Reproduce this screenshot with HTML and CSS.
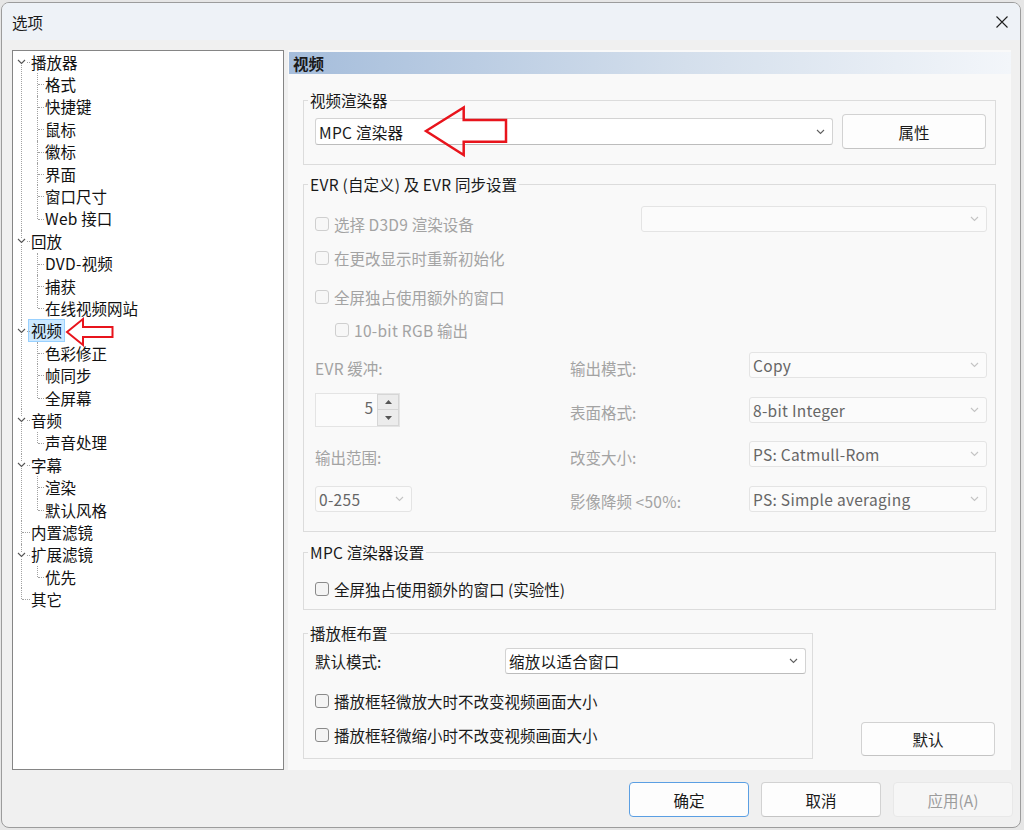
FILE: index.html
```html
<!DOCTYPE html>
<html lang="zh-CN">
<head>
<meta charset="utf-8">
<title>选项</title>
<link rel="stylesheet" href="styles.css">
</head>
<body>
<div class="dialog">
  <div class="titlebar">
    <span class="title">选项</span>
    <span class="close"><svg width="12" height="12" viewBox="0 0 12 12"><path d="M0.5 0.5 L11.5 11.5 M11.5 0.5 L0.5 11.5" stroke="#1f1f1f" stroke-width="1.1" fill="none"/></svg></span>
  </div>

  <div class="main">
    <div class="tree-panel">
      <ul class="tree">
        <li><div class="row"><svg class="chev" width="9" height="6" viewBox="0 0 9 6"><path d="M1 1 L4.5 4.5 L8 1" fill="none" stroke="#555" stroke-width="1.1"/></svg><span class="txt">播放器</span></div>
          <ul>
            <li><div class="row"><span class="txt">格式</span></div></li>
            <li><div class="row"><span class="txt">快捷键</span></div></li>
            <li><div class="row"><span class="txt">鼠标</span></div></li>
            <li><div class="row"><span class="txt">徽标</span></div></li>
            <li><div class="row"><span class="txt">界面</span></div></li>
            <li><div class="row"><span class="txt">窗口尺寸</span></div></li>
            <li><div class="row"><span class="txt"><span class="lat">Web</span> 接口</span></div></li>
          </ul>
        </li>
        <li><div class="row"><svg class="chev" width="9" height="6" viewBox="0 0 9 6"><path d="M1 1 L4.5 4.5 L8 1" fill="none" stroke="#555" stroke-width="1.1"/></svg><span class="txt">回放</span></div>
          <ul>
            <li><div class="row"><span class="txt"><span class="lat">DVD-</span>视频</span></div></li>
            <li><div class="row"><span class="txt">捕获</span></div></li>
            <li><div class="row"><span class="txt">在线视频网站</span></div></li>
          </ul>
        </li>
        <li><div class="row"><svg class="chev" width="9" height="6" viewBox="0 0 9 6"><path d="M1 1 L4.5 4.5 L8 1" fill="none" stroke="#555" stroke-width="1.1"/></svg><span class="txt sel">视频</span></div>
          <ul>
            <li><div class="row"><span class="txt">色彩修正</span></div></li>
            <li><div class="row"><span class="txt">帧同步</span></div></li>
            <li><div class="row"><span class="txt">全屏幕</span></div></li>
          </ul>
        </li>
        <li><div class="row"><svg class="chev" width="9" height="6" viewBox="0 0 9 6"><path d="M1 1 L4.5 4.5 L8 1" fill="none" stroke="#555" stroke-width="1.1"/></svg><span class="txt">音频</span></div>
          <ul>
            <li><div class="row"><span class="txt">声音处理</span></div></li>
          </ul>
        </li>
        <li><div class="row"><svg class="chev" width="9" height="6" viewBox="0 0 9 6"><path d="M1 1 L4.5 4.5 L8 1" fill="none" stroke="#555" stroke-width="1.1"/></svg><span class="txt">字幕</span></div>
          <ul>
            <li><div class="row"><span class="txt">渲染</span></div></li>
            <li><div class="row"><span class="txt">默认风格</span></div></li>
          </ul>
        </li>
        <li><div class="row"><span class="txt">内置滤镜</span></div></li>
        <li><div class="row"><svg class="chev" width="9" height="6" viewBox="0 0 9 6"><path d="M1 1 L4.5 4.5 L8 1" fill="none" stroke="#555" stroke-width="1.1"/></svg><span class="txt">扩展滤镜</span></div>
          <ul>
            <li><div class="row"><span class="txt">优先</span></div></li>
          </ul>
        </li>
        <li><div class="row"><span class="txt">其它</span></div></li>
      </ul>
      <svg class="mark mark-tree" width="52" height="32" viewBox="0 0 52 32"><polygon points="3,16 19,3 19,11 48.5,11 48.5,21 19,21 19,29" fill="none" stroke="#e8141c" stroke-width="2" stroke-linejoin="miter"/></svg>
    </div>

    <div class="page">
      <div class="page-head">视频</div>

      <fieldset class="group g1">
        <legend>视频渲染器</legend>
        <div class="renderer-row">
          <div class="combo combo-renderer"><span class="combo-text">MPC 渲染器</span><svg class="cv" width="9" height="6" viewBox="0 0 9 6"><path d="M1 1 L4.5 4.5 L8 1" fill="none" stroke="#606060" stroke-width="1.1"/></svg></div>
          <button class="btn btn-prop">属性</button>
        </div>
      </fieldset>

      <fieldset class="group g2">
        <legend><span class="lat">EVR (</span>自定义<span class="lat">)</span> 及 <span class="lat">EVR</span> 同步设置</legend>
        <div class="evr-row1">
          <label class="chk dis first-chk"><span class="box"></span><span>选择 <span class="lat">D3D9</span> 渲染设备</span></label>
          <div class="combo dis combo-d3d"><span class="combo-text"></span><svg class="cv" width="9" height="6" viewBox="0 0 9 6"><path d="M1 1 L4.5 4.5 L8 1" fill="none" stroke="#c4c4c4" stroke-width="1.1"/></svg></div>
        </div>
        <label class="chk dis r2"><span class="box"></span>在更改显示时重新初始化</label>
        <label class="chk dis r3"><span class="box"></span>全屏独占使用额外的窗口</label>
        <label class="chk dis r4"><span class="box"></span><span><span class="lat">10-bit RGB</span> 输出</span></label>

        <div class="evr-grid">
          <span class="glabel"><span class="lat">EVR</span> 缓冲:</span>
          <span class="glabel">输出模式:</span>
          <div class="combo dis gcombo"><span class="combo-text">Copy</span><svg class="cv" width="9" height="6" viewBox="0 0 9 6"><path d="M1 1 L4.5 4.5 L8 1" fill="none" stroke="#c4c4c4" stroke-width="1.1"/></svg></div>

          <div class="spin">
            <span class="spin-val">5</span>
            <span class="spin-btns">
              <span class="spin-b"><svg width="7" height="4" viewBox="0 0 7 4"><polygon points="0,4 3.5,0 7,4" fill="#555"/></svg></span>
              <span class="spin-b"><svg width="7" height="4" viewBox="0 0 7 4"><polygon points="0,0 3.5,4 7,0" fill="#555"/></svg></span>
            </span>
          </div>
          <span class="glabel">表面格式:</span>
          <div class="combo dis gcombo"><span class="combo-text">8-bit Integer</span><svg class="cv" width="9" height="6" viewBox="0 0 9 6"><path d="M1 1 L4.5 4.5 L8 1" fill="none" stroke="#c4c4c4" stroke-width="1.1"/></svg></div>

          <span class="glabel">输出范围:</span>
          <span class="glabel">改变大小:</span>
          <div class="combo dis gcombo"><span class="combo-text">PS: Catmull-Rom</span><svg class="cv" width="9" height="6" viewBox="0 0 9 6"><path d="M1 1 L4.5 4.5 L8 1" fill="none" stroke="#c4c4c4" stroke-width="1.1"/></svg></div>

          <div class="combo dis combo-range"><span class="combo-text">0-255</span><svg class="cv" width="9" height="6" viewBox="0 0 9 6"><path d="M1 1 L4.5 4.5 L8 1" fill="none" stroke="#c4c4c4" stroke-width="1.1"/></svg></div>
          <span class="glabel">影像降频 <span class="lat">&lt;50%:</span></span>
          <div class="combo dis gcombo"><span class="combo-text">PS: Simple averaging</span><svg class="cv" width="9" height="6" viewBox="0 0 9 6"><path d="M1 1 L4.5 4.5 L8 1" fill="none" stroke="#c4c4c4" stroke-width="1.1"/></svg></div>
        </div>
      </fieldset>

      <fieldset class="group g3">
        <legend><span class="lat">MPC</span> 渲染器设置</legend>
        <label class="chk"><span class="box"></span>全屏独占使用额外的窗口 (实验性)</label>
      </fieldset>

      <div class="bottom-row">
        <fieldset class="group g4">
          <legend>播放框布置</legend>
          <div class="mode-row">
            <span class="mode-label">默认模式:</span>
            <div class="combo combo-mode"><span class="combo-text">缩放以适合窗口</span><svg class="cv" width="9" height="6" viewBox="0 0 9 6"><path d="M1 1 L4.5 4.5 L8 1" fill="none" stroke="#606060" stroke-width="1.1"/></svg></div>
          </div>
          <label class="chk c1"><span class="box"></span>播放框轻微放大时不改变视频画面大小</label>
          <label class="chk c2"><span class="box"></span>播放框轻微缩小时不改变视频画面大小</label>
        </fieldset>
        <button class="btn btn-default">默认</button>
      </div>

      <svg class="mark mark-combo" width="86" height="54" viewBox="0 0 86 54"><polygon points="3,26 40.7,2.5 40.7,15 83,15 83,36.7 40.7,36.7 40.7,50" fill="none" stroke="#e8141c" stroke-width="2.5" stroke-linejoin="miter"/></svg>
    </div>
  </div>

  <div class="footer">
    <button class="btn fbtn ok">确定</button>
    <button class="btn fbtn">取消</button>
    <button class="btn fbtn disabled">应用(A)</button>
  </div>
</div>
</body>
</html>
```

FILE: styles.css
```css
* { box-sizing: border-box; }
html, body { margin: 0; padding: 0; }
body {
  width: 1024px;
  height: 830px;
  overflow: hidden;
  background: #e6e6e6;
  font-family: "Noto Sans CJK SC", "Microsoft YaHei", sans-serif;
  font-size: 15.5px;
  color: #1a1a1a;
}

.lat { letter-spacing: 0.3px; }

.dialog {
  margin: 2px 0 0 1px;
  width: 1020px;
  height: 826px;
  border: 1px solid #9c9c9c;
  border-radius: 8px;
  background: #f0f0f0;
  overflow: hidden;
  display: flex;
  flex-direction: column;
}

.titlebar {
  flex: none;
  height: 37px;
  background: #eef2f7;
  display: flex;
  align-items: center;
  padding-left: 10px;
}
.title { line-height: 20px; }
.close { margin-left: auto; margin-right: 12px; display: flex; }

.main {
  flex: none;
  height: 730px;
  padding: 10px 9px 0 10px;
  display: flex;
  gap: 4px;
}

/* ---------- tree ---------- */
.tree-panel {
  width: 272px;
  flex: none;
  background: #fff;
  border: 1px solid #858585;
  position: relative;
}
.tree, .tree ul { list-style: none; margin: 0; padding: 0; }
.tree li { position: relative; }
.row {
  position: relative;
  height: 22.4px;
  display: flex;
  align-items: center;
  line-height: 21px;
  white-space: nowrap;
}
.tree > li > .row { padding-left: 18px; }
.tree ul .row { padding-left: 32px; }

.tree > li::before {
  content: "";
  position: absolute;
  left: 8px;
  top: 0;
  bottom: 0;
  border-left: 1px dotted #a2a2a2;
}
.tree > li:first-child::before { top: 11px; }
.tree > li:last-child::before { bottom: auto; height: 11px; }
.tree > li::after {
  content: "";
  position: absolute;
  left: 9px;
  top: 11px;
  width: 8px;
  border-top: 1px dotted #a2a2a2;
}
.tree ul > li::before {
  content: "";
  position: absolute;
  left: 24px;
  top: 0;
  bottom: 0;
  border-left: 1px dotted #a2a2a2;
}
.tree ul > li:last-child::before { bottom: auto; height: 11px; }
.tree ul > li::after {
  content: "";
  position: absolute;
  left: 25px;
  top: 11px;
  width: 6px;
  border-top: 1px dotted #a2a2a2;
}
.chev {
  position: absolute;
  left: 4px;
  top: 8px;
  background: #fff;
  z-index: 1;
}
.txt { color: #111; }
.txt.sel {
  margin-left: -3px;
  padding: 0 2px;
  height: 23px;
  line-height: 21px;
  background: #cce8ff;
  border: 1px solid #99d1ff;
}

.mark { position: absolute; }
.mark-tree { left: 51px; top: 265px; }
.mark-combo { left: 135px; top: 55px; }

/* ---------- page ---------- */
.page {
  flex: 1;
  position: relative;
  background: #f9f9f9;
  padding: 2px 0 11px 0;
  display: flex;
  flex-direction: column;
}
.page-head {
  flex: none;
  height: 22px;
  margin-left: 1px;
  padding-left: 4px;
  line-height: 22px;
  font-weight: bold;
  background: linear-gradient(to right, #a5bddb, #d4dfec 55%, #f3f6fa);
}

.group {
  margin: 0 0 0 15px;
  padding: 0;
  border: 1px solid #dcdcdc;
  min-width: 0;
}
.group legend {
  margin-left: -7px;
  padding: 0 2px;
  height: 20px;
  line-height: 20px;
  color: #1a1a1a;
}

.g1 { width: 693px; margin-top: 16px; padding: 4px 9px 15px 11px; }
.renderer-row { display: flex; align-items: center; height: 35px; }

.combo {
  height: 27px;
  background: #fff;
  border: 1px solid #d3d3d3;
  border-bottom-color: #bcbcbc;
  border-radius: 3px;
  display: flex;
  align-items: center;
  padding-left: 3px;
  padding-right: 7px;
  white-space: nowrap;
}
.combo-text { flex: 1; line-height: 20px; letter-spacing: 0.3px; }
.cv { flex: none; }
.combo.dis {
  background: #fbfbfb;
  border-color: #e4e4e4;
  color: #666;
  height: 26px;
}
.combo-renderer { width: 518px; }

.btn {
  font: inherit;
  color: #1a1a1a;
  background: #fdfdfd;
  border: 1px solid #d2d2d2;
  border-bottom-color: #c4c4c4;
  border-radius: 4px;
  padding: 0;
  height: 35px;
}
.btn-prop { width: 144px; margin-left: 9px; }

.g2 { width: 693px; margin-top: 9px; padding: 0 8px 10px 11px; }
.evr-row1 { display: flex; align-items: flex-start; margin-top: 12px; }
.first-chk { margin-top: 8px; }
.combo-d3d { margin-left: auto; width: 346px; }

.chk {
  display: flex;
  align-items: center;
  gap: 5px;
  height: 20px;
  line-height: 20px;
  white-space: nowrap;
}
.box {
  width: 14px;
  height: 14px;
  flex: none;
  border: 1px solid #8a8a8a;
  border-radius: 3px;
  background: #f4f4f4;
}
.chk.dis { color: #a3a3a3; }
.chk.dis .box { border-color: #cfcfcf; background: #f7f7f7; }
.r2 { margin-top: 14px; }
.r3 { margin-top: 19px; }
.r4 { margin-top: 13px; padding-left: 20px; }

.evr-grid {
  margin-top: 3px;
  display: grid;
  grid-template-columns: 255px 179px 238px;
  grid-template-rows: repeat(4, 44.5px);
  align-items: center;
}
.glabel { color: #a3a3a3; padding-top: 5px; line-height: 20px; white-space: nowrap; }
.gcombo { width: 238px; }
.combo-range { width: 97px; }

.spin {
  width: 85px;
  height: 34px;
  display: flex;
  border: 1px solid #e4e4e4;
  background: #fbfbfb;
}
.spin-val {
  flex: 1;
  text-align: right;
  padding-right: 4px;
  padding-top: 3px;
  line-height: 20px;
  color: #666;
}
.spin-btns { width: 22px; display: flex; flex-direction: column; }
.spin-b {
  flex: 1;
  display: flex;
  align-items: center;
  justify-content: center;
  background: #ececec;
  border: 1px solid #d6d6d6;
}
.spin-b + .spin-b { border-top: none; }

.g3 { width: 693px; margin-top: 10px; padding: 17px 8px 10px 11px; }

.bottom-row { display: flex; align-items: flex-end; margin-top: 13px; }
.g4 { width: 510px; padding: 5px 6px 13px 11px; }
.mode-row { display: flex; align-items: center; height: 26px; }
.mode-label { width: 190px; line-height: 20px; }
.combo-mode { width: 301px; height: 26px; }
.c1 { margin-top: 17px; }
.c2 { margin-top: 14px; }
.btn-default { width: 134px; height: 34px; margin-left: 48px; margin-bottom: 3px; }

/* ---------- footer ---------- */
.footer {
  flex: none;
  display: flex;
  justify-content: flex-end;
  gap: 12px;
  padding: 12px 7px 0 0;
}
.fbtn { width: 120px; height: 35px; }
.fbtn.ok { border: 1px solid #5b9fe3; }
.fbtn.disabled { background: #f6f6f6; border-color: #e8e8e8; color: #9c9c9c; }
```
